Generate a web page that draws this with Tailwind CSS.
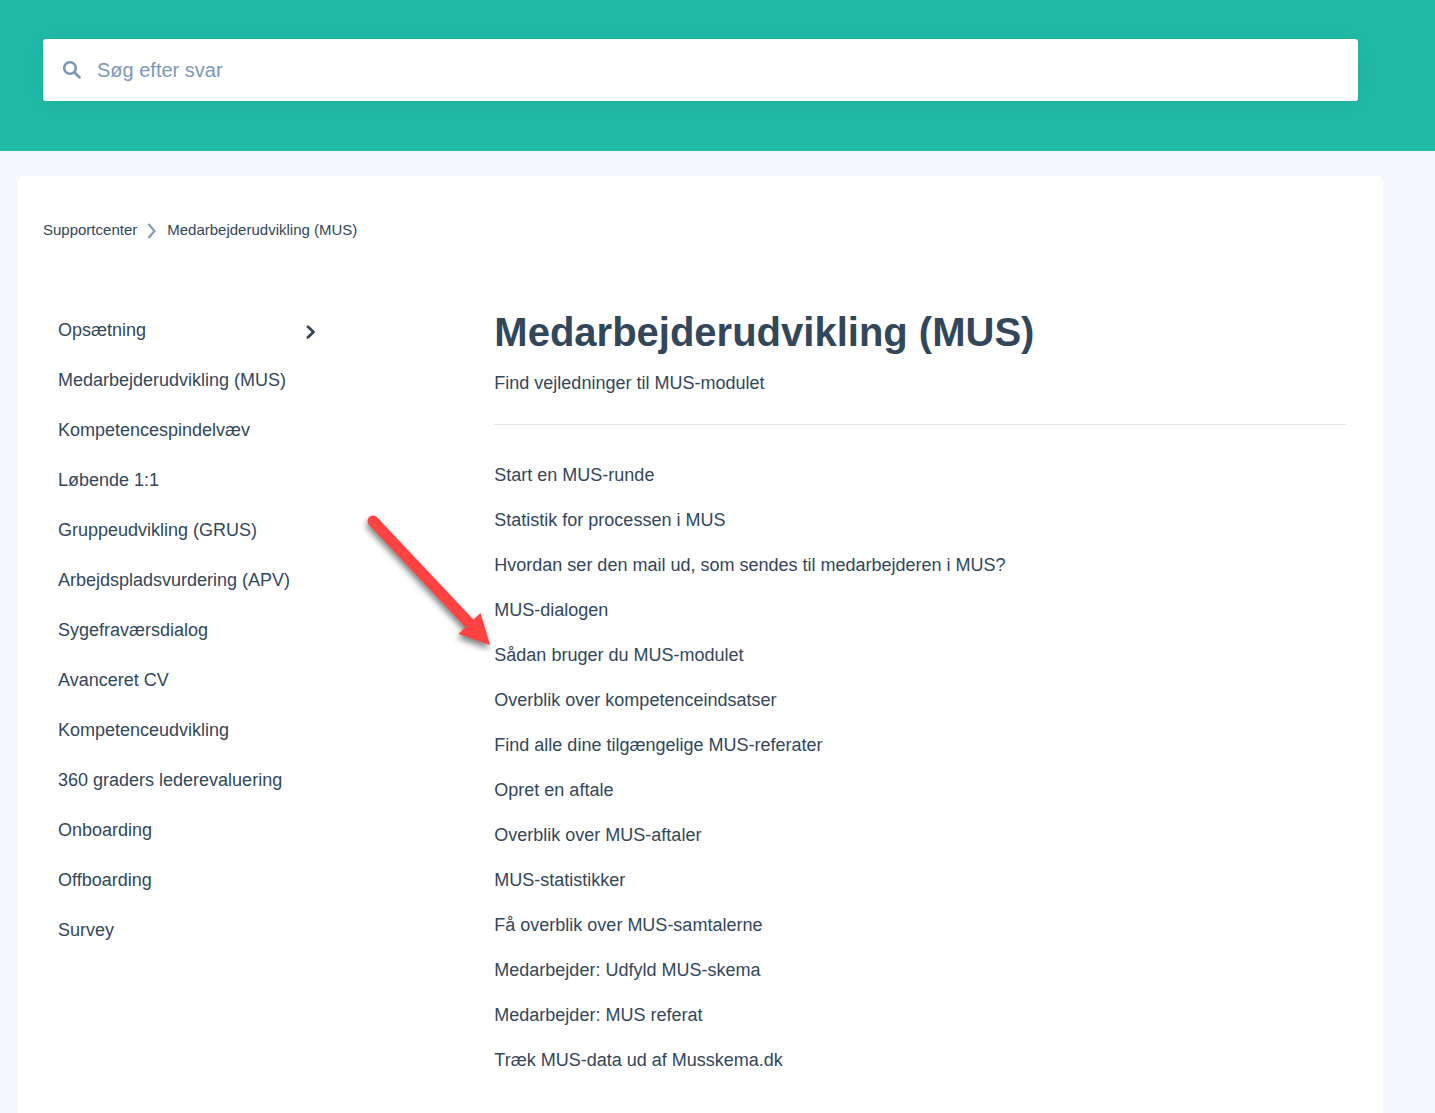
<!DOCTYPE html>
<html lang="da">

<head>
    <meta charset="UTF-8">
    <meta name="viewport" content="width=device-width, initial-scale=1.0">
    <title>Medarbejderudvikling (MUS)</title>
    <script src="https://cdn.jsdelivr.net/npm/@tailwindcss/browser@4"></script>
</head>

<body class="flex min-h-screen flex-col bg-[#f4f7fb] font-['Liberation_Sans',Arial,sans-serif] text-lg leading-[25px] text-[#33475b]">
    <!-- Søgning -->
    <header class="bg-[#20bba6] pt-[39px] pr-[77px] pb-[50px] pl-[43px]">
        <form role="search" class="flex h-[62px] items-center gap-4 rounded-[3px] bg-white px-5 shadow-[0_2px_30px_rgba(0,0,0,0.08)]">
            <svg class="size-[18px] shrink-0" viewBox="0 0 18 18" fill="none" stroke="#7c98b6" aria-hidden="true">
                <circle cx="7" cy="7" r="5.8" stroke-width="2.6" />
                <path d="M11.5 11.5L16.4 16.2" stroke-width="2.8" stroke-linecap="round" />
            </svg>
            <input type="text" aria-label="Søg efter svar" placeholder="Søg efter svar" class="min-w-0 flex-1 text-xl placeholder:text-[#7c98b6] focus:outline-none">
        </form>
    </header>

    <main class="mt-[25px] mr-[52px] ml-[18px] flex-1 rounded-t-[5px] bg-white px-[25px] pt-[42px] pb-10">
        <!-- Brødkrummer -->
        <nav aria-label="Brødkrummer" class="flex items-center gap-[10px] text-[15px] leading-6">
            <a href="#">Supportcenter</a>
            <svg class="mt-[2px] h-4 w-[10px]" viewBox="0 0 10 16" fill="none" stroke="#7c98b6" stroke-width="2" aria-hidden="true">
                <path d="M1.5 1L7.5 8L1.5 15" />
            </svg>
            <a href="#">Medarbejderudvikling (MUS)</a>
        </nav>

        <div class="mt-[63px] flex">
            <!-- Kategorier -->
            <aside class="w-1/3 shrink-0 px-[15px] pt-[13px]">
                <ul class="flex max-w-[260px] flex-col gap-[25px]">
                    <li class="flex items-center justify-between">
                        <a href="#">Opsætning</a>
                        <button type="button" aria-label="Vis Opsætning" class="mt-0.5">
                            <svg class="h-[14px] w-3" viewBox="0 0 12 14" fill="none" stroke="#33475b" stroke-width="2.8" stroke-linecap="round" stroke-linejoin="round">
                                <path d="M2 1.7L7.5 7L2 12.3" />
                            </svg>
                        </button>
                    </li>
                    <li><a href="#">Medarbejderudvikling (MUS)</a></li>
                    <li><a href="#">Kompetencespindelvæv</a></li>
                    <li><a href="#">Løbende 1:1</a></li>
                    <li><a href="#">Gruppeudvikling (GRUS)</a></li>
                    <li><a href="#">Arbejdspladsvurdering (APV)</a></li>
                    <li><a href="#">Sygefraværsdialog</a></li>
                    <li><a href="#">Avanceret CV</a></li>
                    <li><a href="#">Kompetenceudvikling</a></li>
                    <li><a href="#">360 graders lederevaluering</a></li>
                    <li><a href="#">Onboarding</a></li>
                    <li><a href="#">Offboarding</a></li>
                    <li><a href="#">Survey</a></li>
                </ul>
            </aside>

            <!-- Artikler -->
            <section class="relative mr-3 ml-[13px] flex-1">
                <h1 class="text-[40px] leading-[54px] font-bold">Medarbejderudvikling (MUS)</h1>
                <p class="mt-3">Find vejledninger til MUS-modulet</p>
                <hr class="mt-[28px] border-[#dfe3eb]">
                <ul class="mt-[38px] flex flex-col gap-5">
                    <li><a href="#">Start en MUS-runde</a></li>
                    <li><a href="#">Statistik for processen i MUS</a></li>
                    <li><a href="#">Hvordan ser den mail ud, som sendes til medarbejderen i MUS?</a></li>
                    <li><a href="#">MUS-dialogen</a></li>
                    <li><a href="#">Sådan bruger du MUS-modulet</a></li>
                    <li><a href="#">Overblik over kompetenceindsatser</a></li>
                    <li><a href="#">Find alle dine tilgængelige MUS-referater</a></li>
                    <li><a href="#">Opret en aftale</a></li>
                    <li><a href="#">Overblik over MUS-aftaler</a></li>
                    <li><a href="#">MUS-statistikker</a></li>
                    <li><a href="#">Få overblik over MUS-samtalerne</a></li>
                    <li><a href="#">Medarbejder: Udfyld MUS-skema</a></li>
                    <li><a href="#">Medarbejder: MUS referat</a></li>
                    <li><a href="#">Træk MUS-data ud af Musskema.dk</a></li>
                </ul>

                <!-- Pil der peger på "Sådan bruger du MUS-modulet" -->
                <svg class="pointer-events-none absolute top-[195px] -left-[144px] h-[170px] w-[160px] drop-shadow-[-1px_4px_3px_rgba(0,0,0,0.5)]" viewBox="0 0 160 170" aria-hidden="true">
                    <path d="M23 21L121 125" stroke="#ff4242" stroke-width="11" stroke-linecap="round" />
                    <path d="M130.5 113L140 145L108.500 134Z" fill="#ff4242" />
                </svg>
            </section>
        </div>
    </main>
</body>

</html>
